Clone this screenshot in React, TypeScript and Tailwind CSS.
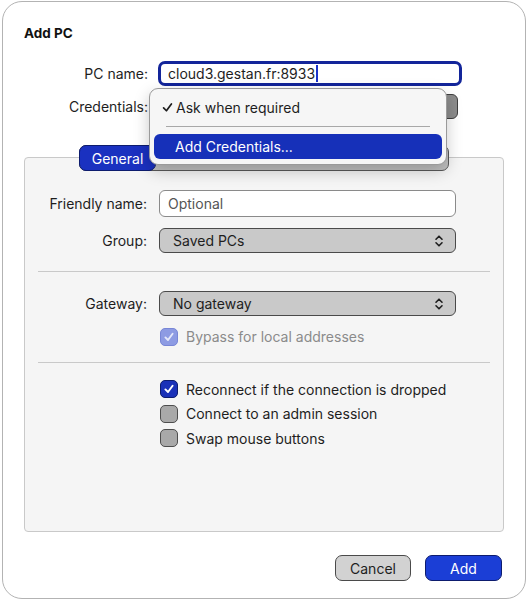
import React from "react";

const font = { fontFamily: "Inter, 'Noto Sans', sans-serif" };

const UpDown = () => (
  <svg width="10" height="14" viewBox="0 0 10 14" fill="none" stroke="#1e1e1e" strokeWidth="1.6" strokeLinecap="round" strokeLinejoin="round">
    <path d="M2 5.2 L5 2.2 L8 5.2" />
    <path d="M2 8.8 L5 11.8 L8 8.8" />
  </svg>
);

const Tick = ({ color = "white", size = 12, weight = 1.9 }: { color?: string; size?: number; weight?: number }) => (
  <svg width={size} height={size} viewBox="0 0 12 12" fill="none" stroke={color} strokeWidth={weight} strokeLinecap="round" strokeLinejoin="round">
    <path d="M2.4 6.4 L5 9 L9.6 2.8" />
  </svg>
);

type CheckState = "on" | "off" | "disabled";

const Check = ({ state, label }: { state: CheckState; label: string }) => {
  const box =
    state === "on"
      ? "bg-[#1a31b8] border-[#0d1c6e]"
      : state === "disabled"
      ? "bg-[#8d9be3] border-[#7886d6]"
      : "bg-[#a9a9a9] border-[#4e4e4e]";
  return (
    <div className="flex items-center gap-[8px] h-[24.5px]">
      <div className={`w-[18px] h-[18px] rounded-[5px] border flex items-center justify-center ${box}`}>
        {state !== "off" && <Tick color={state === "disabled" ? "#e4e8fa" : "white"} />}
      </div>
      <span className={`text-[14px] ${state === "disabled" ? "text-[#8b8b8b]" : "text-[#1e1e1e]"}`}>{label}</span>
    </div>
  );
};

const Select = ({ value }: { value: string }) => (
  <div className="w-[297px] h-[25px] rounded-[6px] border border-[#4a4a4a] bg-[#c9c9c9] flex items-center justify-between pl-[13px] pr-[11px]">
    <span className="text-[14px] text-[#1e1e1e]">{value}</span>
    <UpDown />
  </div>
);

const Row = ({ label, children }: { label: string; children: React.ReactNode }) => (
  <div className="flex items-center">
    <div className="w-[123px] text-right pr-[1px] text-[14px] text-[#1e1e1e]">{label}</div>
    <div className="ml-[11px]">{children}</div>
  </div>
);

export default function App() {
  return (
    <div className="w-[527px] h-[600px] bg-white pt-[1px] pl-[2px]" style={font}>
      <div className="relative w-[524px] h-[598px] rounded-[20px] border border-[#b3b3b3] bg-white flex flex-col px-[21px]">
        <div className="pt-[21px] text-[13.5px] font-bold text-[#111]">Add PC</div>

        {/* host + credentials */}
        <div className="mt-[18px] flex items-center">
          <div className="w-[124px] text-right text-[14px] text-[#1e1e1e]">PC name:</div>
          <div className="ml-[10px] w-[304px] h-[25px] rounded-[7px] border-[3px] border-[#13259a] bg-white flex items-center pl-[7px]">
            <span className="text-[14px] text-[#1e1e1e]">cloud3.gestan.fr:8933</span>
            <span className="w-[2px] h-[17px] bg-[#1b33c9] ml-[1px]" />
          </div>
        </div>
        <div className="mt-[8px] flex items-center">
          <div className="w-[124px] text-right text-[14px] text-[#1e1e1e]">Credentials:</div>
          <div className="ml-[10px] w-[300px] h-[25px] rounded-[6px] border border-[#3f3f3f] bg-[#8c8c8c]" />
        </div>

        {/* tabbed panel */}
        <div className="mt-[38px] relative h-[375px] rounded-[4px] border border-[#c9c9c9] bg-[#f5f5f5] flex flex-col">
          <div className="absolute -top-[13px] left-[54px] w-[370px] h-[26px] rounded-[7px] border border-[#5b5b5b] bg-[#c2c2c2] flex">
            <div className="-m-[1px] w-[77px] h-[26px] rounded-[7px] border border-[#0d1c6e] bg-[#1a31c0] flex items-center justify-center text-[14px] text-white">
              General
            </div>
          </div>

          <div className="mt-[32px] flex flex-col">
            <Row label="Friendly name:">
              <div className="w-[297px] h-[27px] rounded-[6px] border border-[#8a8a8a] bg-white flex items-center pl-[8px] text-[14px] text-[#555]">
                Optional
              </div>
            </Row>
            <div className="mt-[11px]">
              <Row label="Group:">
                <Select value="Saved PCs" />
              </Row>
            </div>
            <div className="mt-[18px] mx-[13px] h-[1px] bg-[#c9c9c9]" />
            <div className="mt-[19px]">
              <Row label="Gateway:">
                <Select value="No gateway" />
              </Row>
            </div>
            <div className="mt-[8px] pl-[135px]">
              <Check state="disabled" label="Bypass for local addresses" />
            </div>
            <div className="mt-[13px] mx-[13px] h-[1px] bg-[#c9c9c9]" />
            <div className="mt-[14px] pl-[135px] flex flex-col">
              <Check state="on" label="Reconnect if the connection is dropped" />
              <Check state="off" label="Connect to an admin session" />
              <Check state="off" label="Swap mouse buttons" />
            </div>
          </div>
        </div>

        <div className="mt-[23px] flex justify-end gap-[14px] pr-[2px]">
          <div className="w-[76px] h-[26px] rounded-[7px] border border-[#4a4a4a] bg-[#d2d2d2] flex items-center justify-center text-[14px] text-[#1e1e1e]">
            Cancel
          </div>
          <div className="w-[77px] h-[26px] rounded-[7px] border border-[#0d1c6e] bg-[#1b3ed6] flex items-center justify-center text-[14px] text-white">
            Add
          </div>
        </div>

        {/* open credentials menu */}
        <div className="absolute left-[146px] top-[86px] w-[298px] rounded-[9px] border border-[#9a9a9a] bg-[#f6f6f6] shadow-[0_6px_16px_rgba(0,0,0,0.22)] px-[4px] pt-[5px] pb-[5px]">
          <div className="h-[26px] flex items-center pl-[7px] text-[14px] text-[#1e1e1e]">
            <span className="w-[15px] flex items-center">
              <Tick color="#1e1e1e" size={13} weight={1.6} />
            </span>
            Ask when required
          </div>
          <div className="mx-[12px] mt-[6px] h-[1px] bg-[#a8a8a8]" />
          <div className="mt-[7px] h-[25px] rounded-[6px] bg-[#1630b9] flex items-center pl-[21px] text-[14px] text-white">
            Add Credentials...
          </div>
        </div>
      </div>
    </div>
  );
}
